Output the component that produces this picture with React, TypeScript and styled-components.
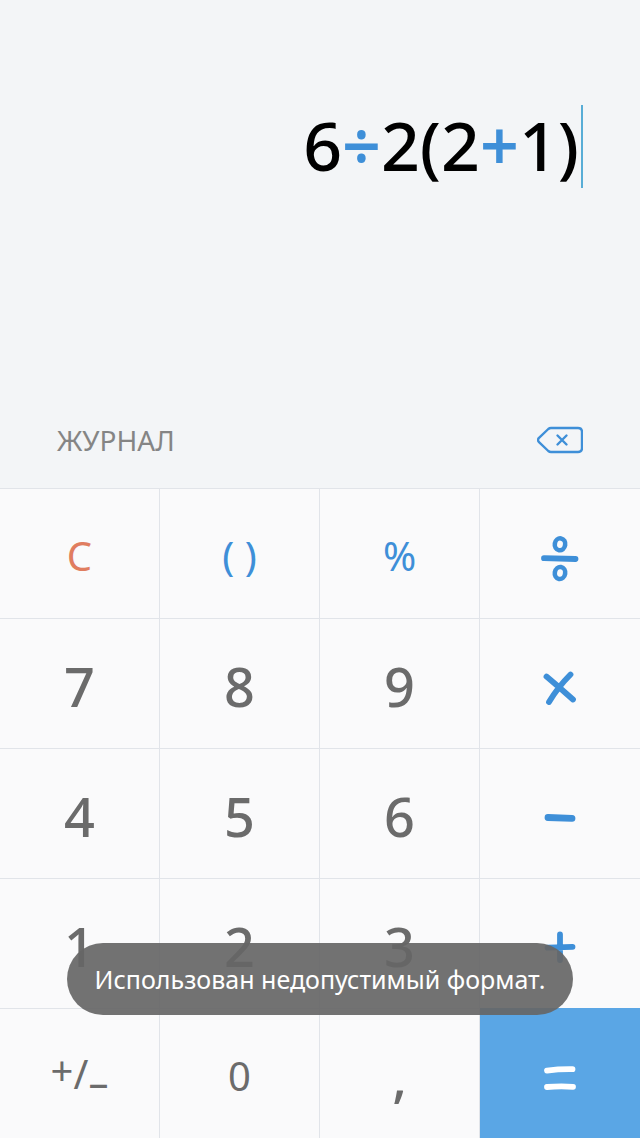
import React from "react";
import styled, { createGlobalStyle } from "styled-components";

const color = {
  display: "#f3f5f7",
  key: "#fafafb",
  line: "#e1e4e9",
  digit: "#6b6b6b",
  blue: "#3e8fd8",
  equals: "#5aa6e5",
  clear: "#e07d60",
  caret: "#58add6",
};

const GlobalStyle = createGlobalStyle`
  *, *::before, *::after { box-sizing: border-box; }
  body {
    margin: 0;
    background: ${color.display};
    font-family: "Noto Sans", "Open Sans", sans-serif;
  }
`;

const Calculator = styled.main`
  position: relative;
  display: flex;
  flex-direction: column;
  min-height: 100vh;
`;

const Display = styled.section`
  flex: 1;
  display: flex;
  flex-direction: column;
  justify-content: space-between;
  background: ${color.display};
`;

const Expression = styled.output`
  display: flex;
  justify-content: flex-end;
  padding: 105px 57px 0;
  font-size: 68px;
  font-weight: 500;
  line-height: 80px;
  color: #000;
  white-space: nowrap;
`;

const Operator = styled.span`
  color: ${color.blue};
  font-weight: 600;
`;

const Caret = styled.span`
  width: 2px;
  height: 83px;
  margin-left: 2px;
  background: ${color.caret};
`;

const Tools = styled.div`
  display: flex;
  align-items: center;
  justify-content: space-between;
  height: 96px;
  padding: 0 57px;
`;

const ToolButton = styled.button`
  display: flex;
  padding: 0;
  border: 0;
  background: none;
  font: inherit;
  font-size: 28px;
  line-height: 40px;
  color: #858585;
  cursor: pointer;
`;

const Keypad = styled.section`
  display: grid;
  grid-template-columns: repeat(4, 1fr);
  grid-auto-rows: 130px;
`;

type Tone = "digit" | "blue" | "clear" | "equals";

const Key = styled.button<{ $tone: Tone; $small?: boolean }>`
  display: flex;
  align-items: center;
  justify-content: center;
  padding: 4px 0 0;
  border: 0 solid ${({ $tone }) => ($tone === "equals" ? color.equals : color.line)};
  border-width: 1px 1px 0 0;
  background: ${({ $tone }) => ($tone === "equals" ? color.equals : color.key)};
  color: ${({ $tone }) => ($tone === "equals" ? "#fff" : color[$tone])};
  font: inherit;
  font-size: ${({ $small }) => ($small ? 40 : 54)}px;
  font-weight: ${({ $small }) => ($small ? 400 : 500)};
  line-height: 1;
  white-space: pre;
  cursor: pointer;

  &:nth-child(4n) {
    border-right-width: 0;
  }
`;

const Raised = styled.span`
  vertical-align: 4px;
`;

const Lowered = styled.span`
  vertical-align: -8px;
`;

const Toast = styled.div`
  position: absolute;
  right: 67px;
  bottom: 123px;
  left: 67px;
  padding: 18px 24px;
  border-radius: 36px;
  background: rgba(102, 102, 102, 0.92);
  color: #fff;
  font-size: 25px;
  line-height: 36px;
  text-align: center;
  white-space: nowrap;
`;

const Glyph = ({ children }: { children: React.ReactNode }) => (
  <svg
    width="56"
    height="56"
    viewBox="0 0 56 56"
    fill="none"
    stroke="currentColor"
    strokeWidth="5.8"
    strokeLinecap="round"
    strokeLinejoin="round"
    aria-hidden="true"
  >
    {children}
  </svg>
);

const DivideIcon = () => (
  <Glyph>
    <path d="M12 30.2 43.5 31" />
    <ellipse cx="28" cy="16.3" rx="5.2" ry="6" strokeWidth="4.6" transform="rotate(10 28 16.3)" />
    <ellipse cx="28" cy="45" rx="5.2" ry="6" strokeWidth="4.6" transform="rotate(10 28 45)" />
  </Glyph>
);

const MultiplyIcon = () => (
  <Glyph>
    <path d="M14.500 18.500Q27 29 41 41.500M38.500 16.500Q26 29 17 44" />
  </Glyph>
);

const MinusIcon = () => (
  <Glyph>
    <path d="M16 29.500 40 30.300" strokeWidth="6.8" />
  </Glyph>
);

const PlusIcon = () => (
  <Glyph>
    <path d="M15.500 29.600 40.500 28.800M28 16.500V42" />
  </Glyph>
);

const EqualsIcon = () => (
  <Glyph>
    <path d="M15 22.600Q27 21 40.500 21.200M15 39Q28 38 41 38.800" />
  </Glyph>
);

const BackspaceIcon = () => (
  <svg
    width="46"
    height="28"
    viewBox="0 0 46 28"
    fill="none"
    stroke={color.blue}
    strokeWidth="2.4"
    strokeLinecap="round"
    strokeLinejoin="round"
    aria-hidden="true"
  >
    <path d="M14 2H41Q45 2 45 6V22Q45 26 41 26H14Q12.500 26 11.300 25L2 16.200Q0 14 2 11.800L11.300 3Q12.500 2 14 2Z" />
    <path d="M20.500 9.500 29.500 18.500M29.500 9.500 20.500 18.500" />
  </svg>
);

interface KeySpec {
  name: string;
  face: React.ReactNode;
  tone?: Tone;
  small?: boolean;
}

const keys: KeySpec[] = [
  { name: "Сброс", face: "C", tone: "clear", small: true },
  { name: "Скобки", face: "( )", tone: "blue", small: true },
  { name: "Процент", face: "%", tone: "blue", small: true },
  { name: "Разделить", face: <DivideIcon />, tone: "blue" },
  { name: "7", face: "7" },
  { name: "8", face: "8" },
  { name: "9", face: "9" },
  { name: "Умножить", face: <MultiplyIcon />, tone: "blue" },
  { name: "4", face: "4" },
  { name: "5", face: "5" },
  { name: "6", face: "6" },
  { name: "Минус", face: <MinusIcon />, tone: "blue" },
  { name: "1", face: "1" },
  { name: "2", face: "2" },
  { name: "3", face: "3" },
  { name: "Плюс", face: <PlusIcon />, tone: "blue" },
  {
    name: "Сменить знак",
    face: (
      <span>
        <Raised>+</Raised>/<Lowered>–</Lowered>
      </span>
    ),
    small: true,
  },
  { name: "0", face: "0", small: true },
  { name: "Запятая", face: "," },
  { name: "Равно", face: <EqualsIcon />, tone: "equals" },
];

export default function App() {
  return (
    <>
      <GlobalStyle />
      <Calculator>
        <Display>
          <Expression>
            6<Operator>÷</Operator>2(2<Operator>+</Operator>1)
            <Caret />
          </Expression>
          <Tools>
            <ToolButton type="button">ЖУРНАЛ</ToolButton>
            <ToolButton type="button" aria-label="Стереть">
              <BackspaceIcon />
            </ToolButton>
          </Tools>
        </Display>
        <Keypad>
          {keys.map(({ name, face, tone = "digit", small }) => (
            <Key key={name} type="button" aria-label={name} $tone={tone} $small={small}>
              {face}
            </Key>
          ))}
        </Keypad>
        <Toast role="status">Использован недопустимый формат.</Toast>
      </Calculator>
    </>
  );
}
